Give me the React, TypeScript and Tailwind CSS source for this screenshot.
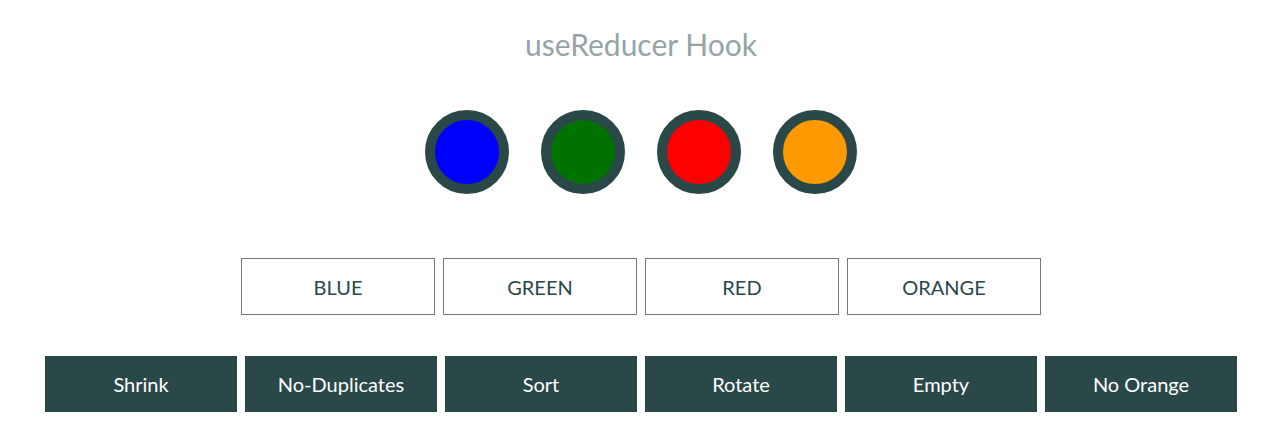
import React from 'react';

const circles = [
  { id: 'blue', fill: 'bg-[#0000ff]' },
  { id: 'green', fill: 'bg-[#007200]' },
  { id: 'red', fill: 'bg-[#ff0000]' },
  { id: 'orange', fill: 'bg-[#ff9900]' },
];

const colorButtons = ['BLUE', 'GREEN', 'RED', 'ORANGE'];
const actions = ['Shrink', 'No-Duplicates', 'Sort', 'Rotate', 'Empty', 'No Orange'];

export default function App() {
  return (
    <div className="w-[1269px] h-[447px] bg-white pl-[13px] flex flex-col items-center font-['Lato',_'Open_Sans',_sans-serif]">
      <h1 className="mt-[26px] h-[36px] text-[30px] leading-[36px] text-[#95a5a6] font-normal">
        useReducer Hook
      </h1>

      <div className="mt-[48px] flex gap-[32px]">
        {circles.map((c) => (
          <div
            key={c.id}
            className={`w-[84px] h-[84px] rounded-full border-[10px] border-[#2a4848] ${c.fill}`}
          />
        ))}
      </div>

      <div className="mt-[64px] flex gap-[8px]">
        {colorButtons.map((label) => (
          <button
            key={label}
            className="w-[194px] h-[57px] border border-[#777777] bg-white text-[#2a4848] text-[20px] flex items-center justify-center"
          >
            {label}
          </button>
        ))}
      </div>

      <div className="mt-[41px] flex gap-[8px]">
        {actions.map((label) => (
          <button
            key={label}
            className="w-[192px] h-[56px] bg-[#2a4848] text-white text-[20px] flex items-center justify-center"
          >
            {label}
          </button>
        ))}
      </div>
    </div>
  );
}
